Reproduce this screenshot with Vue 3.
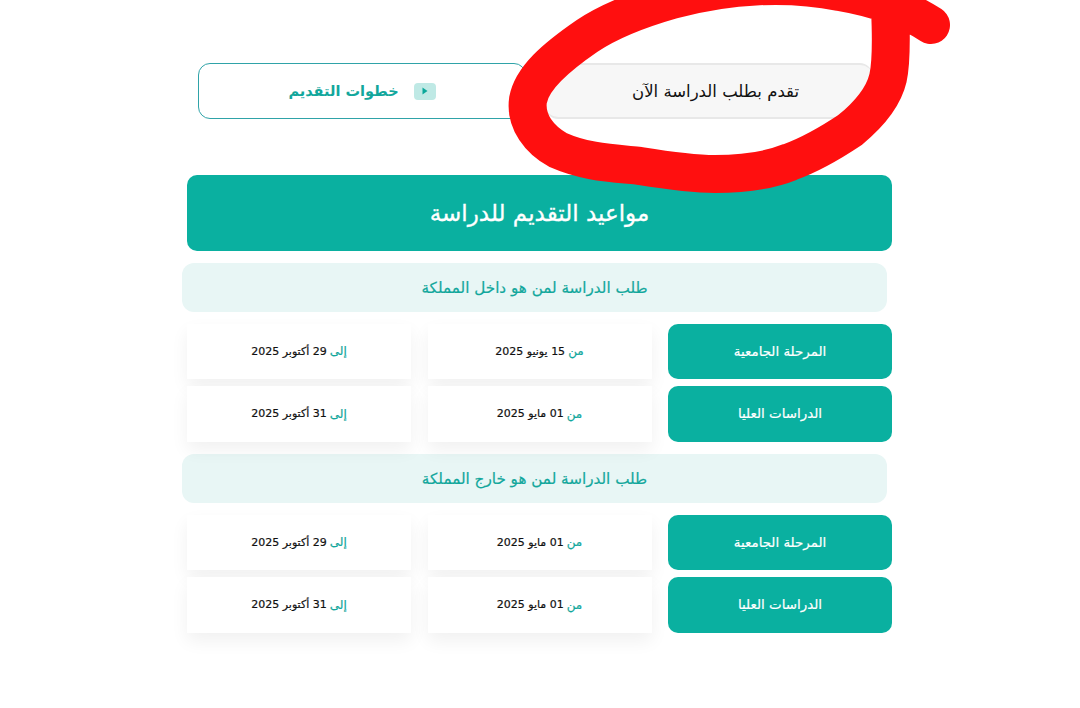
<script setup>
  const sections = [
    {
      title: 'طلب الدراسة لمن هو داخل المملكة',
      rows: [
        { name: 'المرحلة الجامعية', from: '15 يونيو 2025', to: '29 أكتوبر 2025' },
        { name: 'الدراسات العليا', from: '01 مايو 2025', to: '31 أكتوبر 2025' },
      ],
    },
    {
      title: 'طلب الدراسة لمن هو خارج المملكة',
      rows: [
        { name: 'المرحلة الجامعية', from: '01 مايو 2025', to: '29 أكتوبر 2025' },
        { name: 'الدراسات العليا', from: '01 مايو 2025', to: '31 أكتوبر 2025' },
      ],
    },
  ]
</script>

<template>
  <div class="page" dir="rtl">
    <div class="actions">
      <button class="action apply"><span class="apply_text">تقدم بطلب الدراسة الآن</span></button>
      <button class="action steps">
        <span class="play">
          <svg width="6" height="8" viewBox="0 0 6 8"><path d="M0.5 0.5 L5.5 4 L0.5 7.5 Z" fill="#0aa89a" /></svg>
        </span>
        خطوات التقديم
      </button>
    </div>

    <h1 class="main_title">مواعيد التقديم للدراسة</h1>

    <section v-for="section in sections" :key="section.title" class="section">
      <h2 class="section_title">{{ section.title }}</h2>
      <div class="rows">
        <div v-for="row in section.rows" :key="row.name" class="row">
          <div class="row_name">{{ row.name }}</div>
          <div class="date"><span class="prefix">من</span> {{ row.from }}</div>
          <div class="date"><span class="prefix">إلى</span> {{ row.to }}</div>
        </div>
      </div>
    </section>

    <svg class="scribble" width="1080" height="708" viewBox="0 0 1080 708">
      <path
        d="M931 25 C905 8 875 -2 840 -8 C790 -18 730 -16 672 0 C630 12 605 24 587 36 C555 58 532 78 528 100 C525 122 540 140 558 150 C585 162 610 163 640 166 C665 170 690 174 715 174 C745 174 770 170 790 162 C812 154 832 142 850 130 C872 112 884 95 888 78 C892 60 891 30 890 8"
        fill="none"
        stroke="#ff0f0f"
        stroke-width="38"
        stroke-linecap="round"
        stroke-linejoin="round"
      />
    </svg>
  </div>
</template>

<style>
  html, body {
    background: #fff;
  }
</style>

<style scoped>
  .page {
    position: relative;
    width: 1080px;
    height: 708px;
    box-sizing: border-box;
    padding: 63px 188px 0 187px;
    overflow: hidden;
    background: #fff;
    font-family: "DejaVu Sans", sans-serif;
  }

  .actions {
    display: flex;
    gap: 20px;
    height: 56px;
    margin: 0 20px 56px 11px;
  }
  .action {
    flex: 1;
    display: flex;
    align-items: center;
    justify-content: center;
    gap: 15px;
    font-family: inherit;
    border-radius: 12px;
    background: #fff;
  }
  .apply {
    background: #f7f7f7;
    border: 0;
    border-top: 2px solid #e8e8e8;
    border-bottom: 2px solid #e8e8e8;
    color: #111;
    font-size: 16.5px;
  }
  .apply_text {
    margin-right: -13px;
  }
  .steps {
    border: 1px solid #2fa3a8;
    color: #12a79c;
    font-size: 14.5px;
    font-weight: bold;
  }
  .play {
    display: flex;
    align-items: center;
    justify-content: center;
    width: 22px;
    height: 17px;
    border-radius: 4px;
    background: #bfe9e5;
  }

  .main_title {
    display: flex;
    align-items: center;
    justify-content: center;
    height: 76px;
    margin: 0 0 12px;
    border-radius: 10px;
    background: #0ab0a0;
    color: #fff;
    font-size: 23px;
    font-weight: 500;
    -webkit-text-stroke: 0.3px #fff;
  }

  .section {
    margin-bottom: 12.5px;
  }
  .section_title {
    display: flex;
    align-items: center;
    justify-content: center;
    height: 49px;
    margin: 0 5px 11.5px -5px;
    border-radius: 12px;
    background: #e8f6f5;
    color: #12a79c;
    font-size: 15.2px;
    font-weight: 500;
    -webkit-text-stroke: 0.2px #12a79c;
  }

  .rows {
    display: flex;
    flex-direction: column;
    gap: 7px;
  }
  .row {
    display: grid;
    grid-template-columns: 224px 224px 224px;
    justify-content: space-between;
    height: 55.5px;
  }
  .row_name {
    display: flex;
    align-items: center;
    justify-content: center;
    border-radius: 10px;
    background: #0ab0a0;
    color: #fff;
    font-size: 13.4px;
    font-weight: 500;
    -webkit-text-stroke: 0.2px #fff;
  }
  .date {
    display: flex;
    align-items: center;
    justify-content: center;
    gap: 3px;
    background: #fff;
    box-shadow: 0 8px 18px rgba(0, 0, 0, 0.06);
    color: #111;
    font-size: 11px;
    -webkit-text-stroke: 0.2px #111;
  }
  .prefix {
    color: #12a79c;
    font-size: 12px;
    -webkit-text-stroke: 0.2px #12a79c;
  }

  .scribble {
    position: absolute;
    top: 0;
    left: 0;
    pointer-events: none;
  }
</style>
